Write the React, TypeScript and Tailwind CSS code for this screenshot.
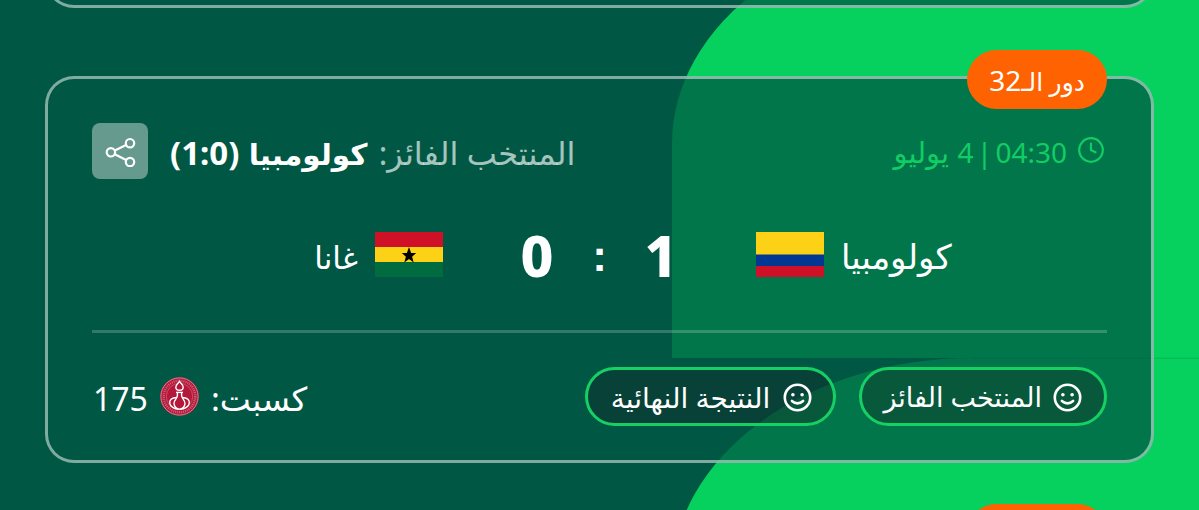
import type { ReactNode } from "react";

const PREDICTIONS = [
  { id: "winner", label: "المنتخب الفائز", width: "w-[248px]", text: "w-[158px] text-[27px]" },
  { id: "score", label: "النتيجة النهائية", width: "w-[251px]", text: "w-[162px] text-[28px]" },
];

function Backdrop() {
  return (
    <svg className="absolute inset-0" width="1199" height="510" viewBox="0 0 1199 510">
      <path d="M672 358V144A300 220 0 0 1 972 -76H1199V358Z" fill="#06d15f" />
      <path d="M672 792V578A300 220 0 0 1 972 358H1199V792Z" fill="#06d15f" />
      <path d="M972 358.2H1199" stroke="#04b455" strokeWidth="1" />
    </svg>
  );
}

function ShareIcon() {
  return (
    <svg width="32" height="32" viewBox="0 0 32 32" fill="none" stroke="white" strokeWidth="2.2">
      <circle cx="6.9" cy="17.3" r="4.2" />
      <circle cx="26" cy="8.2" r="4.2" />
      <circle cx="26" cy="27" r="4.2" />
      <path d="M10.8 15.4L22.1 9.9M10.8 19.3L22.1 25.1" />
    </svg>
  );
}

function ClockIcon() {
  return (
    <svg className="-mt-[3px]" width="26" height="26" viewBox="0 0 26 26" fill="none" stroke="#12cd63" strokeWidth="2.2" strokeLinecap="round">
      <circle cx="13" cy="13" r="11.8" />
      <path d="M13 6.5V13L17.5 15.3" />
    </svg>
  );
}

function SmileIcon() {
  return (
    <svg className="mt-[2px]" width="29" height="29" viewBox="0 0 29 29" fill="none" stroke="white" strokeWidth="2.6" strokeLinecap="round">
      <circle cx="14.5" cy="14.5" r="12.7" />
      <path d="M8.9 17.9Q14.5 22.8 20.1 17.9" />
      <circle cx="9.9" cy="11.7" r="1.8" fill="white" stroke="none" />
      <circle cx="19.1" cy="11.7" r="1.8" fill="white" stroke="none" />
    </svg>
  );
}

function PointsLogo() {
  return (
    <svg width="39" height="39" viewBox="0 0 39 39" fill="none">
      <circle cx="19.5" cy="19.5" r="19.3" fill="#b3183a" />
      <circle cx="19.5" cy="19.5" r="18.6" stroke="#d98c9a" strokeWidth="0.9" />
      <circle cx="19.5" cy="19.5" r="15.8" stroke="#d0637a" strokeWidth="2.4" strokeDasharray="1 1" />
      <circle cx="19.5" cy="19.5" r="13.2" stroke="#d4677d" strokeWidth="0.7" />
      <g stroke="white" strokeWidth="1.4" fill="#b3183a">
        <path d="M17 20.5C11 20.5 9.5 23.5 9.7 26C10 29.5 14 32.1 19.5 32.1S29 29.5 29.3 26C29.5 23.5 28 20.5 22 20.5Z" />
        <path d="M17.4 15.5V18.5C17.4 21.5 14 23 14 26.5C14 29.5 16.8 32.1 19.5 32.1S25 29.5 25 26.5C25 23 21.6 21.5 21.6 18.5V15.5" />
        <path d="M16 15.4H23" />
        <path d="M19.5 4.3C18 6.7 15.8 8 15.8 10.2C15.8 12 17.5 13.2 19.5 13.2S23.2 12 23.2 10.2C23.2 8 21 6.7 19.5 4.3Z" />
      </g>
    </svg>
  );
}

function ColombiaFlag() {
  return (
    <svg width="68" height="45" viewBox="0 0 68 45">
      <path d="M0 0H68V45H0Z" fill="#ce1126" />
      <path d="M0 0H68V34H0Z" fill="#003893" />
      <path d="M0 0H68V22.5H0Z" fill="#fcd116" />
    </svg>
  );
}

function GhanaFlag() {
  return (
    <svg width="68" height="45" viewBox="0 0 68 45">
      <path d="M0 0H68V45H0Z" fill="#006b3f" />
      <path d="M0 0H68V30H0Z" fill="#fcd116" />
      <path d="M0 0H68V15H0Z" fill="#ce1126" />
      <path d="M34 15L36.1 21H41.2L37.1 24.7L38.7 30.4L34 27L29.3 30.4L30.9 24.7L26.8 21H31.9Z" fill="black" />
    </svg>
  );
}

function Card({ className, children }: { className: string; children?: ReactNode }) {
  return (
    <section className={`relative mx-auto w-[1109px] shrink-0 rounded-[29px] border-[3px] border-white/50 bg-[#005744]/75 px-[44px] ${className}`}>
      {children}
    </section>
  );
}

function StageBadge({ children }: { children?: ReactNode }) {
  return (
    <div className="absolute -top-[29px] right-[44px] flex h-[59px] w-[140px] items-center justify-center rounded-full bg-[#ff6200] text-[25px] whitespace-nowrap">
      {children}
    </div>
  );
}

export default function App() {
  return (
    <main
      dir="rtl"
      className="relative h-[510px] w-[1199px] overflow-hidden bg-[#005744] font-['Noto_Sans','DejaVu_Sans',sans-serif] leading-none text-white"
    >
      <Backdrop />
      <div className="relative -mt-[92px] flex flex-col gap-[67px]">
        <Card className="mb-px h-[100px]" />

        <Card className="h-[387px]">
          <StageBadge>
            <span>
              دور الـ<span className="text-[28px]">32</span>
            </span>
          </StageBadge>

          <header className="mt-[44px] flex h-[56px] items-center justify-between">
            <div className="flex items-center gap-[11px] pr-[3px] text-[28px] whitespace-nowrap text-[#12cd63]">
              <ClockIcon />
              <span className="[word-spacing:-4px]">
                04:30 | 4 <span className="mr-[5px] text-[29px]">يوليو</span>
              </span>
            </div>
            <div className="flex items-center gap-[22px]">
              <p className="pt-[3px] text-[32px] whitespace-nowrap">
                <span className="ml-[3px] text-white/65">المنتخب الفائز:</span>{" "}
                <strong>
                  <span className="ml-[1px] text-[29.5px]">كولومبيا</span> <span className="text-[33px]">(1:0)</span>
                </strong>
              </p>
              <button className="flex size-[56px] items-center justify-center rounded-lg bg-white/40">
                <ShareIcon />
              </button>
            </div>
          </header>

          <div className="mt-[53px] flex h-[45px] items-center">
            <div className="flex flex-1 items-center justify-end gap-[17px]">
              <span className="pt-[3px] text-[34px]">كولومبيا</span>
              <ColombiaFlag />
            </div>
            <div className="flex w-[313px] items-center justify-center pt-[2px] text-[57px] font-extrabold">
              <span className="w-[32px] text-center">1</span>
              <span className="w-[92px] text-center font-['Liberation_Sans'] text-[44px] font-bold">:</span>
              <span className="w-[32px] text-center">0</span>
            </div>
            <div className="flex flex-1 items-center gap-[17px]">
              <GhanaFlag />
              <span className="pt-[6px] text-[31px]">غانا</span>
            </div>
          </div>

          <hr className="mt-[53px] border-t-[3px] border-white/20" />

          <footer className="mt-[34px] flex items-center justify-between">
            <div className="flex gap-[23px]">
              {PREDICTIONS.map((p) => (
                <button
                  key={p.id}
                  className={`flex h-[59px] items-center justify-center gap-[11px] rounded-full border-[3px] border-[#16d064] bg-[#200010]/25 ${p.width}`}
                >
                  <SmileIcon />
                  <span className={`whitespace-nowrap ${p.text}`}>{p.label}</span>
                </button>
              ))}
            </div>
            <div className="flex items-center gap-[12px] pl-[1px] text-[32px]">
              <span className="pt-[3px] text-[33px]">كسبت:</span>
              <PointsLogo />
              <span className="pt-[4px]">175</span>
            </div>
          </footer>
        </Card>

        <Card className="h-[100px]">
          <StageBadge />
        </Card>
      </div>
    </main>
  );
}
